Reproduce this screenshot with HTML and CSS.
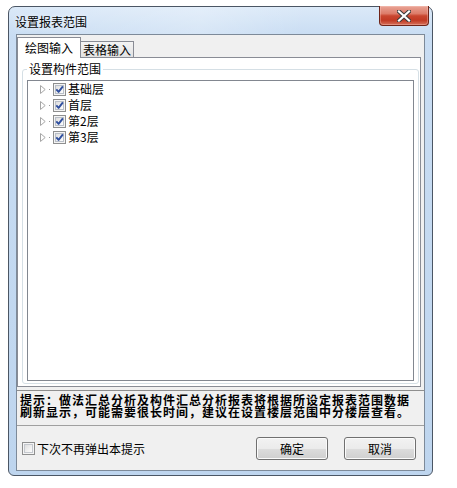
FILE: index.html
```html
<!DOCTYPE html>
<html lang="zh-CN">
<head>
<meta charset="utf-8">
<title>设置报表范围</title>
<link rel="stylesheet" href="styles.css">
</head>
<body>
<svg class="defs" width="0" height="0" aria-hidden="true">
  <defs>
    <linearGradient id="cbg" x1="0" y1="0" x2="1" y2="1">
      <stop offset="0" stop-color="#dcdcdc"/>
      <stop offset="1" stop-color="#ffffff"/>
    </linearGradient>
    <symbol id="chk" viewBox="0 0 13 13">
      <rect x="0.5" y="0.5" width="12" height="12" fill="#f4f4f4" stroke="#8e8f8f"/>
      <rect x="2.5" y="2.5" width="8" height="8" fill="url(#cbg)" stroke="#b9bfc8"/>
      <path d="M3.3 6.4 L5.6 8.9 L9.9 3.3" fill="none" stroke="#2f4f9f" stroke-width="1.9" stroke-linejoin="round"/>
    </symbol>
    <symbol id="unchk" viewBox="0 0 13 13">
      <rect x="0.5" y="0.5" width="12" height="12" fill="#f4f4f4" stroke="#8e8f8f"/>
      <rect x="2.5" y="2.5" width="8" height="8" fill="url(#cbg)" stroke="#c4c8ce"/>
    </symbol>
    <symbol id="tri" viewBox="0 0 6 9">
      <path d="M0.5 0.5 L5.2 4.5 L0.5 8.5 Z" fill="#ffffff" stroke="#a6a6a6"/>
    </symbol>
  </defs>
</svg>

<div class="window">
  <div class="titlebar">
    <span class="title">设置报表范围</span>
    <div class="close">
      <svg width="14" height="12" viewBox="0 0 14 12">
        <path d="M2 1.5 L12 10.5 M12 1.5 L2 10.5" stroke="#3b3b3b" stroke-width="4.2" stroke-linecap="square"/>
        <path d="M2 1.5 L12 10.5 M12 1.5 L2 10.5" stroke="#ffffff" stroke-width="2.2" stroke-linecap="square"/>
      </svg>
    </div>
  </div>

  <div class="client">
    <div class="tabs">
      <div class="tab active">绘图输入</div>
      <div class="tab inactive">表格输入</div>
    </div>

    <div class="panel">
      <fieldset class="group">
        <legend>设置构件范围</legend>
        <div class="tree">
          <div class="row">
            <svg class="tri" width="6" height="9"><use href="#tri"/></svg>
            <span class="dot"></span>
            <svg class="cb" width="13" height="13"><use href="#chk"/></svg>
            <span class="label">基础层</span>
          </div>
          <div class="row">
            <svg class="tri" width="6" height="9"><use href="#tri"/></svg>
            <span class="dot"></span>
            <svg class="cb" width="13" height="13"><use href="#chk"/></svg>
            <span class="label">首层</span>
          </div>
          <div class="row">
            <svg class="tri" width="6" height="9"><use href="#tri"/></svg>
            <span class="dot"></span>
            <svg class="cb" width="13" height="13"><use href="#chk"/></svg>
            <span class="label">第2层</span>
          </div>
          <div class="row">
            <svg class="tri" width="6" height="9"><use href="#tri"/></svg>
            <span class="dot"></span>
            <svg class="cb" width="13" height="13"><use href="#chk"/></svg>
            <span class="label">第3层</span>
          </div>
        </div>
      </fieldset>
    </div>

    <div class="hint">提示：做法汇总分析及构件汇总分析报表将根据所设定报表范围数据刷新显示，可能需要很长时间，建议在设置楼层范围中分楼层查看。</div>

    <div class="footer">
      <div class="chk-label">
        <svg class="cb" width="13" height="13"><use href="#unchk"/></svg>
        <span>下次不再弹出本提示</span>
      </div>
      <div class="btns">
        <div class="btn">确定</div>
        <div class="btn">取消</div>
      </div>
    </div>
  </div>
</div>
</body>
</html>
```

FILE: styles.css
```css
html, body {
  margin: 0;
  padding: 0;
  background: #ffffff;
}

body {
  font-family: "Noto Sans CJK SC", "Noto Sans", sans-serif;
  font-size: 12px;
  color: #000000;
}

.defs {
  position: absolute;
  width: 0;
  height: 0;
  overflow: hidden;
}

.window {
  box-sizing: border-box;
  width: 425px;
  height: 470px;
  margin: 6px 0 0 8px;
  border: 1px solid #4b5664;
  border-radius: 7px 7px 6px 6px;
  background: linear-gradient(to bottom, #dbe9f8 0px, #c9ddf3 28px, #bed5ee 100%);
  display: flex;
  flex-direction: column;
}

.titlebar {
  height: 27px;
  display: flex;
  padding: 0 3px 0 6px;
  background: linear-gradient(100deg, rgba(255,255,255,0) 0%, rgba(255,255,255,0.25) 45%, rgba(255,255,255,0) 70%);
  border-radius: 6px 6px 0 0;
}

.title {
  line-height: 27px;
  margin-top: 1px;
  font-size: 12px;
  color: #000;
  text-shadow: 0 0 5px rgba(255,255,255,0.9);
}

.close {
  box-sizing: border-box;
  margin-left: auto;
  margin-top: -1px;
  width: 50px;
  height: 20px;
  border: 1px solid #6f2418;
  border-top: none;
  border-radius: 0 0 4px 4px;
  background: linear-gradient(to bottom, #e9a597 0%, #dd7c69 40%, #c9462f 52%, #c13a24 75%, #d5705a 100%);
  box-shadow: inset 0 0 0 1px rgba(255,210,200,0.35);
  display: flex;
  align-items: center;
  justify-content: center;
}

.close svg {
  display: block;
}

.client {
  flex: 1;
  margin: 0 7px 4px;
  border: 1px solid #7d8a99;
  background: #f0f0f0;
  display: flex;
  flex-direction: column;
}

.tabs {
  display: flex;
  align-items: flex-end;
  height: 20px;
  margin-top: 2px;
}

.tab {
  box-sizing: border-box;
  border: 1px solid #898c95;
  border-bottom: none;
  text-align: center;
  font-size: 12px;
  white-space: nowrap;
}

.tab.active {
  position: relative;
  z-index: 1;
  width: 64px;
  height: 21px;
  margin-bottom: -1px;
  padding-top: 2px;
  line-height: 16px;
  background: #ffffff;
}

.tab.inactive {
  width: 53px;
  height: 16px;
  border-left: none;
  line-height: 15px;
  background: linear-gradient(to bottom, #f4f4f4, #e2e2e2);
}

.panel {
  border: 1px solid #898c95;
  margin-right: 3px;
  background: #ffffff;
  display: flex;
  flex-direction: column;
}

.group {
  margin: 4px 1px 2px 4px;
  padding: 4px 4px 2px 4px;
  border: 1px solid #d5dfe5;
  border-radius: 3px;
  min-width: 0;
}

.group legend {
  padding: 0 2px;
  font-size: 12px;
  line-height: 14px;
}

.tree {
  box-sizing: border-box;
  height: 301px;
  border: 1px solid #828790;
  background: #ffffff;
}

.row {
  height: 16px;
  display: flex;
  align-items: center;
  padding-left: 12px;
}

.row .tri {
  display: block;
  flex: none;
}

.row .dot {
  width: 1px;
  height: 1px;
  margin-left: 3px;
  margin-top: 1px;
  background: #9a9a9a;
  flex: none;
}

.row .cb {
  display: block;
  flex: none;
  margin-left: 3px;
}

.row .label {
  margin-left: 2px;
  line-height: 16px;
  font-size: 12px;
}

.hint {
  margin-top: 3px;
  border-top: 1px solid #8e8e8e;
  border-bottom: 1px solid #a0a0a0;
  padding: 3px 8px 7px 3px;
  font-weight: bold;
  font-size: 12px;
  line-height: 12px;
  letter-spacing: 1px;
}

.footer {
  box-sizing: border-box;
  height: 44px;
  padding: 11px 8px 10px 5px;
  display: flex;
  align-items: center;
}

.chk-label {
  flex: 1;
  display: flex;
  align-items: center;
  gap: 2px;
  font-size: 12px;
  line-height: 14px;
}

.chk-label .cb {
  display: block;
}

.btns {
  display: flex;
  gap: 16px;
}

.btn {
  box-sizing: border-box;
  width: 72px;
  height: 23px;
  border: 1px solid #707070;
  border-radius: 3px;
  background: linear-gradient(to bottom, #f2f2f2 0%, #ebebeb 50%, #dddddd 51%, #cfcfcf 100%);
  box-shadow: inset 0 0 0 1px #fbfbfb;
  text-align: center;
  line-height: 21px;
  font-size: 12px;
}
```
